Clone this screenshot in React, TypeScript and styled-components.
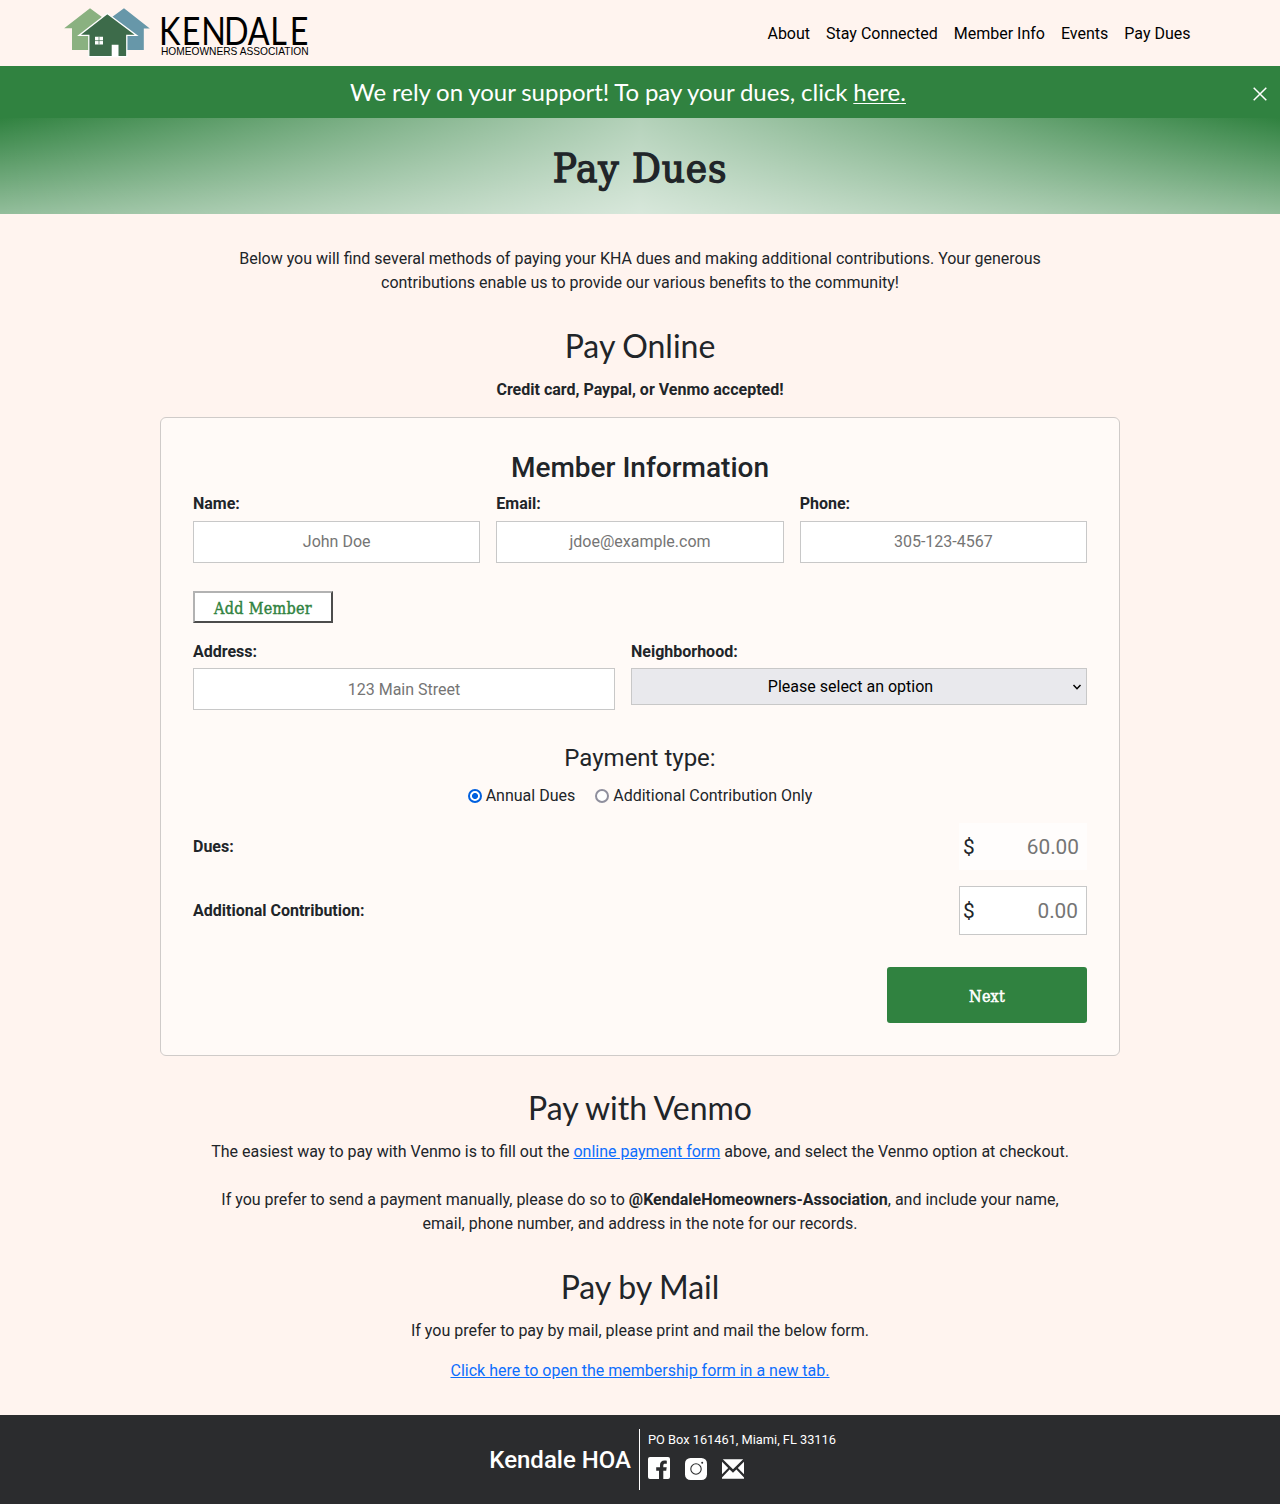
import React from 'react';
import styled, { createGlobalStyle } from 'styled-components';

const slab = `'Roboto Slab', 'DejaVu Serif Condensed', 'DejaVu Serif', serif`;
const sans = `Roboto, 'Liberation Sans', sans-serif`;
const lato = `Lato, 'Liberation Sans', sans-serif`;
const green = '#308240';

const GlobalStyle = createGlobalStyle`
  *, *::before, *::after { box-sizing: border-box; }
  body {
    margin: 0;
    background: #fff4ef;
    color: #212529;
    font: 400 16px/24px ${sans};
  }
  h1, h2, h3, h4, p { margin: 0; }
  input, select, button { font-family: inherit; }
`;

const Navbar = styled.header`
  height: 66px;
  padding: 0 89.5px 0 64px;
  display: flex;
  align-items: center;
  justify-content: space-between;
`;
const NavLinks = styled.nav`
  display: flex;
  gap: 16px;
  padding-top: 2px;
`;
const NavLink = styled.a`
  color: #000;
  text-decoration: none;
`;
const Logo = styled.svg`
  display: block;
  width: 256px;
  height: 66px;
`;

const Banner = styled.div`
  height: 52px;
  padding: 0 12px 0 0;
  display: flex;
  align-items: center;
  background: ${green};
  color: #fff;
  font: 400 24px/36px ${lato};
  word-spacing: -0.4px;
`;
const BannerText = styled.div`
  flex: 1;
  padding-left: 4px;
  text-align: center;
  a { color: #fff; text-underline-offset: 2px; text-decoration-thickness: 1px; }
`;
const CloseButton = styled.button`
  width: 16px;
  height: 16px;
  margin-top: 4px;
  padding: 0;
  border: 0;
  background: none;
  svg { display: block; }
`;

const Hero = styled.div`
  height: 96px;
  display: flex;
  align-items: center;
  justify-content: center;
  background:
    linear-gradient(to right, rgba(255, 255, 255, 0), rgba(255, 255, 255, 0.64) 50%, rgba(255, 255, 255, 0)),
    linear-gradient(to bottom, rgba(255, 255, 255, 0), rgba(255, 255, 255, 0.48)),
    ${green};
`;
const HeroTitle = styled.h1`
  font: 500 40px/48px ${slab};
  letter-spacing: 0.9px;
  -webkit-text-stroke: 1.3px currentColor;
  padding-top: 3px;
`;

const Main = styled.main`
  width: 960px;
  margin: 0 auto;
  padding: 33px 0 32.2px;
  text-align: center;
`;
const Paragraph = styled.p<{ $gap?: number }>`
  padding: 0 48px;
  margin-bottom: ${(p) => p.$gap ?? 16}px;
  a { color: #0d6efd; }
`;
const SectionTitle = styled.h2<{ $gap?: number }>`
  font: 400 32px/38.4px ${lato};
  word-spacing: -0.6px;
  margin-bottom: ${(p) => p.$gap ?? 12}px;
`;

const Card = styled.form`
  margin-bottom: 33px;
  height: 639px;
  padding: 33px 32px 32px;
  border: 1px solid #cfcbc9;
  border-radius: 6px;
  background: #fffaf7;
`;
const CardTitle = styled.h3`
  font: 500 28px/33.6px ${sans};
  margin-bottom: 7.4px;
`;
const Fields = styled.div<{ $columns: string; $labelGap: number }>`
  display: grid;
  grid-template-columns: ${(p) => p.$columns};
  gap: 16px;
  align-items: start;
  label { gap: ${(p) => p.$labelGap}px; }
`;
const Field = styled.label`
  display: grid;
  text-align: left;
  font-weight: 700;
`;
const TextInput = styled.input<{ $top?: number }>`
  width: 100%;
  height: 42px;
  padding: ${(p) => p.$top ?? 7}px 8px ${(p) => 15 - (p.$top ?? 7)}px;
  border: 1px solid #c8c8c8;
  border-radius: 0;
  background: #fff;
  font-size: 16px;
  text-align: center;
  &::placeholder { color: #757575; opacity: 1; }
`;
const SelectWrap = styled.span`
  position: relative;
  display: block;
  height: 37px;
  svg { position: absolute; right: 5px; top: 15px; }
`;
const Select = styled.select`
  display: block;
  appearance: none;
  width: 100%;
  height: 37px;
  padding: 0 21px 0 4px;
  border: 1px solid #c8c8c8;
  border-radius: 0;
  background: #e9e9ed;
  color: #000;
  font-size: 16px;
  text-align: center;
  text-align-last: center;
`;
const AddButton = styled.button`
  display: block;
  width: 140px;
  height: 32px;
  margin: 28px 0 17px;
  padding: 4px 0 0;
  border: 2px solid;
  border-color: #b2b2b2 #4c4c4c #4c4c4c #b2b2b2;
  background: #fff;
  color: ${green};
  font: 500 16px/24px ${slab};
  letter-spacing: 0.3px;
  -webkit-text-stroke: 0.4px currentColor;
`;
const PaymentTitle = styled.h4`
  margin: 34px 0 11px;
  font: 400 24px/28.8px ${sans};
`;
const RadioRow = styled.div`
  display: flex;
  justify-content: center;
  gap: 20px;
  margin-bottom: 15px;
`;
const RadioLabel = styled.label`
  display: flex;
  align-items: center;
  gap: 4px;
`;
const Radio = styled.input`
  appearance: none;
  width: 14px;
  height: 14px;
  margin: 1px 0 0;
  border: 2px solid #8f8f9d;
  border-radius: 50%;
  background: #fff;
  &:checked {
    border-color: #0060df;
    background: radial-gradient(circle, #0060df 2.6px, #fff 3.4px);
  }
`;
const AmountRow = styled.div<{ $gap: number }>`
  display: flex;
  align-items: center;
  justify-content: space-between;
  margin-bottom: ${(p) => p.$gap}px;
  font-weight: 700;
`;
const AmountLabel = styled.span`
  padding-top: 2px;
`;
const AmountBox = styled.div<{ $fixed?: boolean }>`
  display: flex;
  align-items: center;
  width: 128px;
  height: ${(p) => (p.$fixed ? 47 : 49)}px;
  padding: 2px 8px 0 ${(p) => (p.$fixed ? 4 : 3)}px;
  border: ${(p) => (p.$fixed ? '0' : '1px solid #c8c8c8')};
  background: ${(p) => (p.$fixed ? '#fffdfc' : '#fff')};
  font: 400 20.8px/30px ${sans};
`;
const AmountInput = styled.input`
  flex: 1;
  min-width: 0;
  padding: 0;
  border: 0;
  background: none;
  color: #757575;
  font-size: 20.8px;
  text-align: right;
  &::placeholder { color: #757575; opacity: 1; }
`;
const NextButton = styled.button`
  display: block;
  width: 200px;
  height: 56px;
  margin-left: auto;
  padding: 5px 0 0;
  border: 0;
  border-radius: 3px;
  background: ${green};
  color: #fff;
  font: 500 16px/24px ${slab};
  letter-spacing: 0.2px;
  -webkit-text-stroke: 0.5px currentColor;
`;

const Footer = styled.footer`
  height: 89px;
  display: grid;
  grid-template-columns: 1fr 1fr;
  align-items: center;
  background: #2b2c2e;
  color: #fff;
`;
const FooterName = styled.div`
  height: 61px;
  padding-right: 8px;
  border-right: 1px solid #fff;
  text-align: right;
  font: 500 24px/62px ${sans};
`;
const FooterContact = styled.div`
  height: 61px;
  padding-left: 8px;
  font-size: 12.8px;
  line-height: 22px;
`;
const Social = styled.div`
  display: flex;
  gap: 15px;
  margin-top: 6px;
  svg { display: block; }
`;

const KendaleLogo = () => (
  <Logo viewBox="64 0 256 66" role="img" aria-label="Kendale Homeowners Association">
    <path fill="#8ab180" d="M90 8.2 64.2 28.2H72V50h20V30l14-10z" />
    <path fill="#6797a9" d="M124 8.2 149.8 28.4h-6V50H122V30l-14-10z" />
    <path fill="#3d6b4a" stroke="#fff" strokeWidth="1.3" d="M107.3 13.6 79 35.4h9.8v21.2h38V35.4h9.8z" />
    <path fill="#fff" d="M95 36.7h8v7.8h-8zM111.7 44.8h6.8v11.8h-6.8z" />
    <path stroke="#3d6b4a" strokeWidth=".7" d="M99 36.7v7.8M95 40.6h8" />
    <text
      transform="scale(.84 1)"
      x="189.300 216.500 239.500 266.800 294.800 321.800 344.800"
      y="44.8"
      fontFamily="Lato, sans-serif"
      fontSize="38.5"
    >
      KENDALE
    </text>
    <text x="161" y="54.8" fontFamily="'Liberation Sans', sans-serif" fontSize="10.2" textLength="147.500" lengthAdjust="spacingAndGlyphs">HOMEOWNERS ASSOCIATION</text>
  </Logo>
);

const FacebookIcon = () => (
  <svg width="22" height="22" viewBox="0 0 22 22">
    <path fill="#fff" d="M2 0h18a2 2 0 0 1 2 2v18a2 2 0 0 1-2 2h-4.7v-8.3h2.9l.5-3.4h-3.4V8.400c0-1 .5-1.700 1.800-1.700h1.700V3.800c-.5-.1-1.400-.2-2.300-.2-2.800 0-4.500 1.600-4.500 4.400v2.300H8.200v3.400H11V22H2a2 2 0 0 1-2-2V2a2 2 0 0 1 2-2z" />
  </svg>
);
const InstagramIcon = () => (
  <svg width="22" height="24" viewBox="0 0 22 24">
    <rect y="1" width="22" height="22" rx="5.5" fill="#fff" />
    <circle cx="11" cy="12" r="5.200" fill="none" stroke="#2b2c2e" strokeWidth="1.100" />
    <circle cx="17.200" cy="5.800" r="1" fill="#2b2c2e" />
  </svg>
);
const MailIcon = () => (
  <svg width="22" height="24" viewBox="0 0 22 24">
    <path fill="#fff" d="M.8 2.200h20.400L11 12.300zM0 4.800l6.200 6.200L0 17.200zM22 4.800 15.800 11l6.200 6.200zM0 20.400 7.600 12.400l3.400 3.400 3.400-3.400 7.600 8v1.400H0z" />
  </svg>
);

const links = ['About', 'Stay Connected', 'Member Info', 'Events', 'Pay Dues'];
const memberFields = [
  { label: 'Name:', placeholder: 'John Doe' },
  { label: 'Email:', placeholder: 'jdoe@example.com' },
  { label: 'Phone:', placeholder: '305-123-4567' },
];

export default function App() {
  return (
    <>
      <GlobalStyle />
      <Navbar>
        <KendaleLogo />
        <NavLinks>
          {links.map((l) => (
            <NavLink key={l} href="#">{l}</NavLink>
          ))}
        </NavLinks>
      </Navbar>
      <Banner>
        <BannerText>
          We rely on your support! To pay your dues, click <a href="#">here.</a>
        </BannerText>
        <CloseButton aria-label="Close">
          <svg width="16" height="16" viewBox="0 0 16 16">
            <path d="M1.700 1.700 14.300 14.300M14.300 1.700 1.700 14.300" stroke="#fff" strokeWidth="1.500" />
          </svg>
        </CloseButton>
      </Banner>
      <Hero>
        <HeroTitle>Pay Dues</HeroTitle>
      </Hero>
      <Main>
        <Paragraph $gap={32}>
          Below you will find several methods of paying your KHA dues and making additional contributions. Your
          generous contributions enable us to provide our various benefits to the community!
        </Paragraph>
        <SectionTitle $gap={12.6}>Pay Online</SectionTitle>
        <Paragraph $gap={15}>
          <b>Credit card, Paypal, or Venmo accepted!</b>
        </Paragraph>
        <Card onSubmit={(e) => e.preventDefault()}>
          <CardTitle>Member Information</CardTitle>
          <Fields $columns="repeat(3, 1fr)" $labelGap={5}>
            {memberFields.map((f) => (
              <Field key={f.label}>
                {f.label}
                <TextInput placeholder={f.placeholder} />
              </Field>
            ))}
          </Fields>
          <AddButton type="button">Add Member</AddButton>
          <Fields $columns="422px 1fr" $labelGap={4}>
            <Field>
              Address:
              <TextInput placeholder="123 Main Street" $top={8.5} />
            </Field>
            <Field>
              Neighborhood:
              <SelectWrap>
                <Select>
                  <option>Please select an option</option>
                </Select>
                <svg width="10" height="8" viewBox="0 0 10 8">
                  <path d="M1.500 2 5 5.700 8.500 2" fill="none" stroke="#000" strokeWidth="1.500" />
                </svg>
              </SelectWrap>
            </Field>
          </Fields>
          <PaymentTitle>Payment type:</PaymentTitle>
          <RadioRow>
            <RadioLabel>
              <Radio type="radio" name="type" defaultChecked />
              Annual Dues
            </RadioLabel>
            <RadioLabel>
              <Radio type="radio" name="type" />
              Additional Contribution Only
            </RadioLabel>
          </RadioRow>
          <AmountRow $gap={16}>
            <AmountLabel>Dues:</AmountLabel>
            <AmountBox $fixed>
              $<AmountInput placeholder="60.00" disabled />
            </AmountBox>
          </AmountRow>
          <AmountRow $gap={32}>
            <AmountLabel>Additional Contribution:</AmountLabel>
            <AmountBox>
              $<AmountInput placeholder="0.00" />
            </AmountBox>
          </AmountRow>
          <NextButton>Next</NextButton>
        </Card>
        <SectionTitle $gap={12.8}>Pay with Venmo</SectionTitle>
        <Paragraph $gap={24}>
          The easiest way to pay with Venmo is to fill out the <a href="#">online payment form</a> above, and select
          the Venmo option at checkout.
        </Paragraph>
        <Paragraph $gap={32}>
          If you prefer to send a payment manually, please do so to <b>@KendaleHomeowners-Association</b>, and include
          your name, email, phone number, and address in the note for our records.
        </Paragraph>
        <SectionTitle $gap={12.2}>Pay by Mail</SectionTitle>
        <Paragraph>If you prefer to pay by mail, please print and mail the below form.</Paragraph>
        <Paragraph $gap={0}>
          <a href="#">Click here to open the membership form in a new tab.</a>
        </Paragraph>
      </Main>
      <Footer>
        <FooterName>Kendale HOA</FooterName>
        <FooterContact>
          PO Box 161461, Miami, FL 33116
          <Social>
            <FacebookIcon />
            <InstagramIcon />
            <MailIcon />
          </Social>
        </FooterContact>
      </Footer>
    </>
  );
}
